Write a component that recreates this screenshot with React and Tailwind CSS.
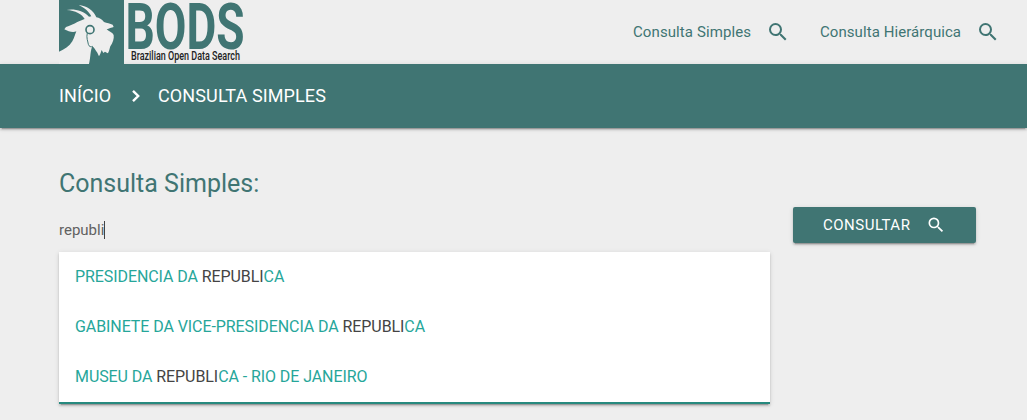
import { MdSearch } from "react-icons/md";

function Logo() {
  return (
    <svg className="overflow-visible" width="186" height="64" viewBox="0 0 186 64" role="img" aria-label="BODS">
      <rect width="65" height="64" fill="#407573" />
      <g transform="translate(-9 0) scale(.33333)">
        <path
          fill="#eeeeee"
          d="M27 155 C43 149 58 139 67 124 C73 113 76 101 79 94 C70 98 55 95 43 88 L48 81 C59 77 72 72 82 66 C92 61 99 59 104 57 C98 44 75 31 50 30 C70 25 101 32 117 50 L124 49 C116 34 106 25 86 15 C109 17 131 31 139 52 C148 53 155 58 162 66 C170 70 181 70 188 74 L191 81 C185 83 177 85 170 88 C177 94 188 98 191 105 C193 115 188 129 181 139 C178 148 177 157 173 160 L165 155 L160 159 L155 150 L151 161 L147 169 L142 158 C136 151 132 141 127 139 C121 151 122 172 117 192 L27 192 Z"
        />
        <circle cx="120" cy="89" r="12" fill="none" stroke="#407573" strokeWidth="5" />
        <path d="M112 98 C108 114 114 124 115 133 C117 140 123 142 128 139" fill="none" stroke="#407573" strokeWidth="3" />
      </g>
      <text x="66.5" y="49" fontFamily="Roboto, sans-serif" fontWeight="700" fontSize="64.5" fill="#407573" textLength="119" lengthAdjust="spacingAndGlyphs">BODS</text>
      <text x="72" y="60.3" fontFamily="Roboto, sans-serif" fontWeight="500" fontSize="12" fill="#222222" textLength="109" lengthAdjust="spacingAndGlyphs">Brazilian Open Data Search</text>
    </svg>
  );
}

const results = [
  ["PRESIDENCIA DA ", "REPUBLI", "CA"],
  ["GABINETE DA VICE-PRESIDENCIA DA ", "REPUBLI", "CA"],
  ["MUSEU DA ", "REPUBLI", "CA - RIO DE JANEIRO"],
];

export default function App() {
  return (
    <div className="h-[420px] w-[1027px] overflow-hidden bg-[#eeeeee] font-['Roboto',sans-serif] text-[#407573]">
      <header className="flex h-16 justify-between pl-[59px]">
        <Logo />
        <nav className="flex items-center pr-[27px] text-[15px]">
          <a className="flex items-center">
            <span className="w-[133px] tracking-[0.1px]">Consulta Simples</span>
            <MdSearch className="size-6" />
          </a>
          <a className="ml-[30px] flex items-center">
            <span className="w-[156px] tracking-[0.07px]">Consulta Hierárquica</span>
            <MdSearch className="size-6" />
          </a>
        </nav>
      </header>
      <nav className="flex h-16 items-center bg-[#407573] pl-[59px] text-[18px] text-white shadow-[0_2px_2px_0_rgba(0,0,0,0.14),0_1px_5px_0_rgba(0,0,0,0.12),0_3px_1px_-2px_rgba(0,0,0,0.2)]">
        <span className="w-[65px] pb-0.5 tracking-[0.12px]">INÍCIO</span>
        <svg className="mr-[10px] size-6" viewBox="0 0 24 24" fill="none" stroke="currentColor" strokeWidth="2.4">
          <path d="M9 6.8 L14.2 12 L9 17.2" />
        </svg>
        <span className="pb-0.5 tracking-[0.12px]">CONSULTA SIMPLES</span>
      </nav>
      <main className="flex pl-[59px] pt-[38px]">
        <section className="w-[711px]">
          <h1 className="h-[50px] text-[25px] leading-[35px]">Consulta Simples:</h1>
          <div className="flex h-9 items-center pb-2 text-[15px] text-[#616161]">
            <span>republi</span>
            <span className="h-[18px] w-px bg-[#424242]" />
          </div>
          <ul className="h-[152px] border-b-2 border-[#26897e] bg-white shadow-[0_2px_2px_0_rgba(0,0,0,0.14),0_1px_5px_0_rgba(0,0,0,0.12),0_3px_1px_-2px_rgba(0,0,0,0.2)]">
            {results.map(([before, match, after]) => (
              <li key={before} className="flex h-[50px] items-center whitespace-pre px-4 text-[16px] tracking-[-0.08px] text-[#26a69a]">
                {before}<span className="text-[#444444]">{match}</span>{after}
              </li>
            ))}
          </ul>
        </section>
        <button className="ml-[23px] mt-[41px] flex h-9 w-[183px] items-center rounded-[2px] bg-[#407573] pl-[30px] text-[15px] text-white shadow-[0_2px_2px_0_rgba(0,0,0,0.14),0_1px_5px_0_rgba(0,0,0,0.12),0_3px_1px_-2px_rgba(0,0,0,0.2)]">
          <span className="w-[103px] text-left tracking-[0.5px]">CONSULTAR</span>
          <MdSearch className="size-5" />
        </button>
      </main>
    </div>
  );
}
